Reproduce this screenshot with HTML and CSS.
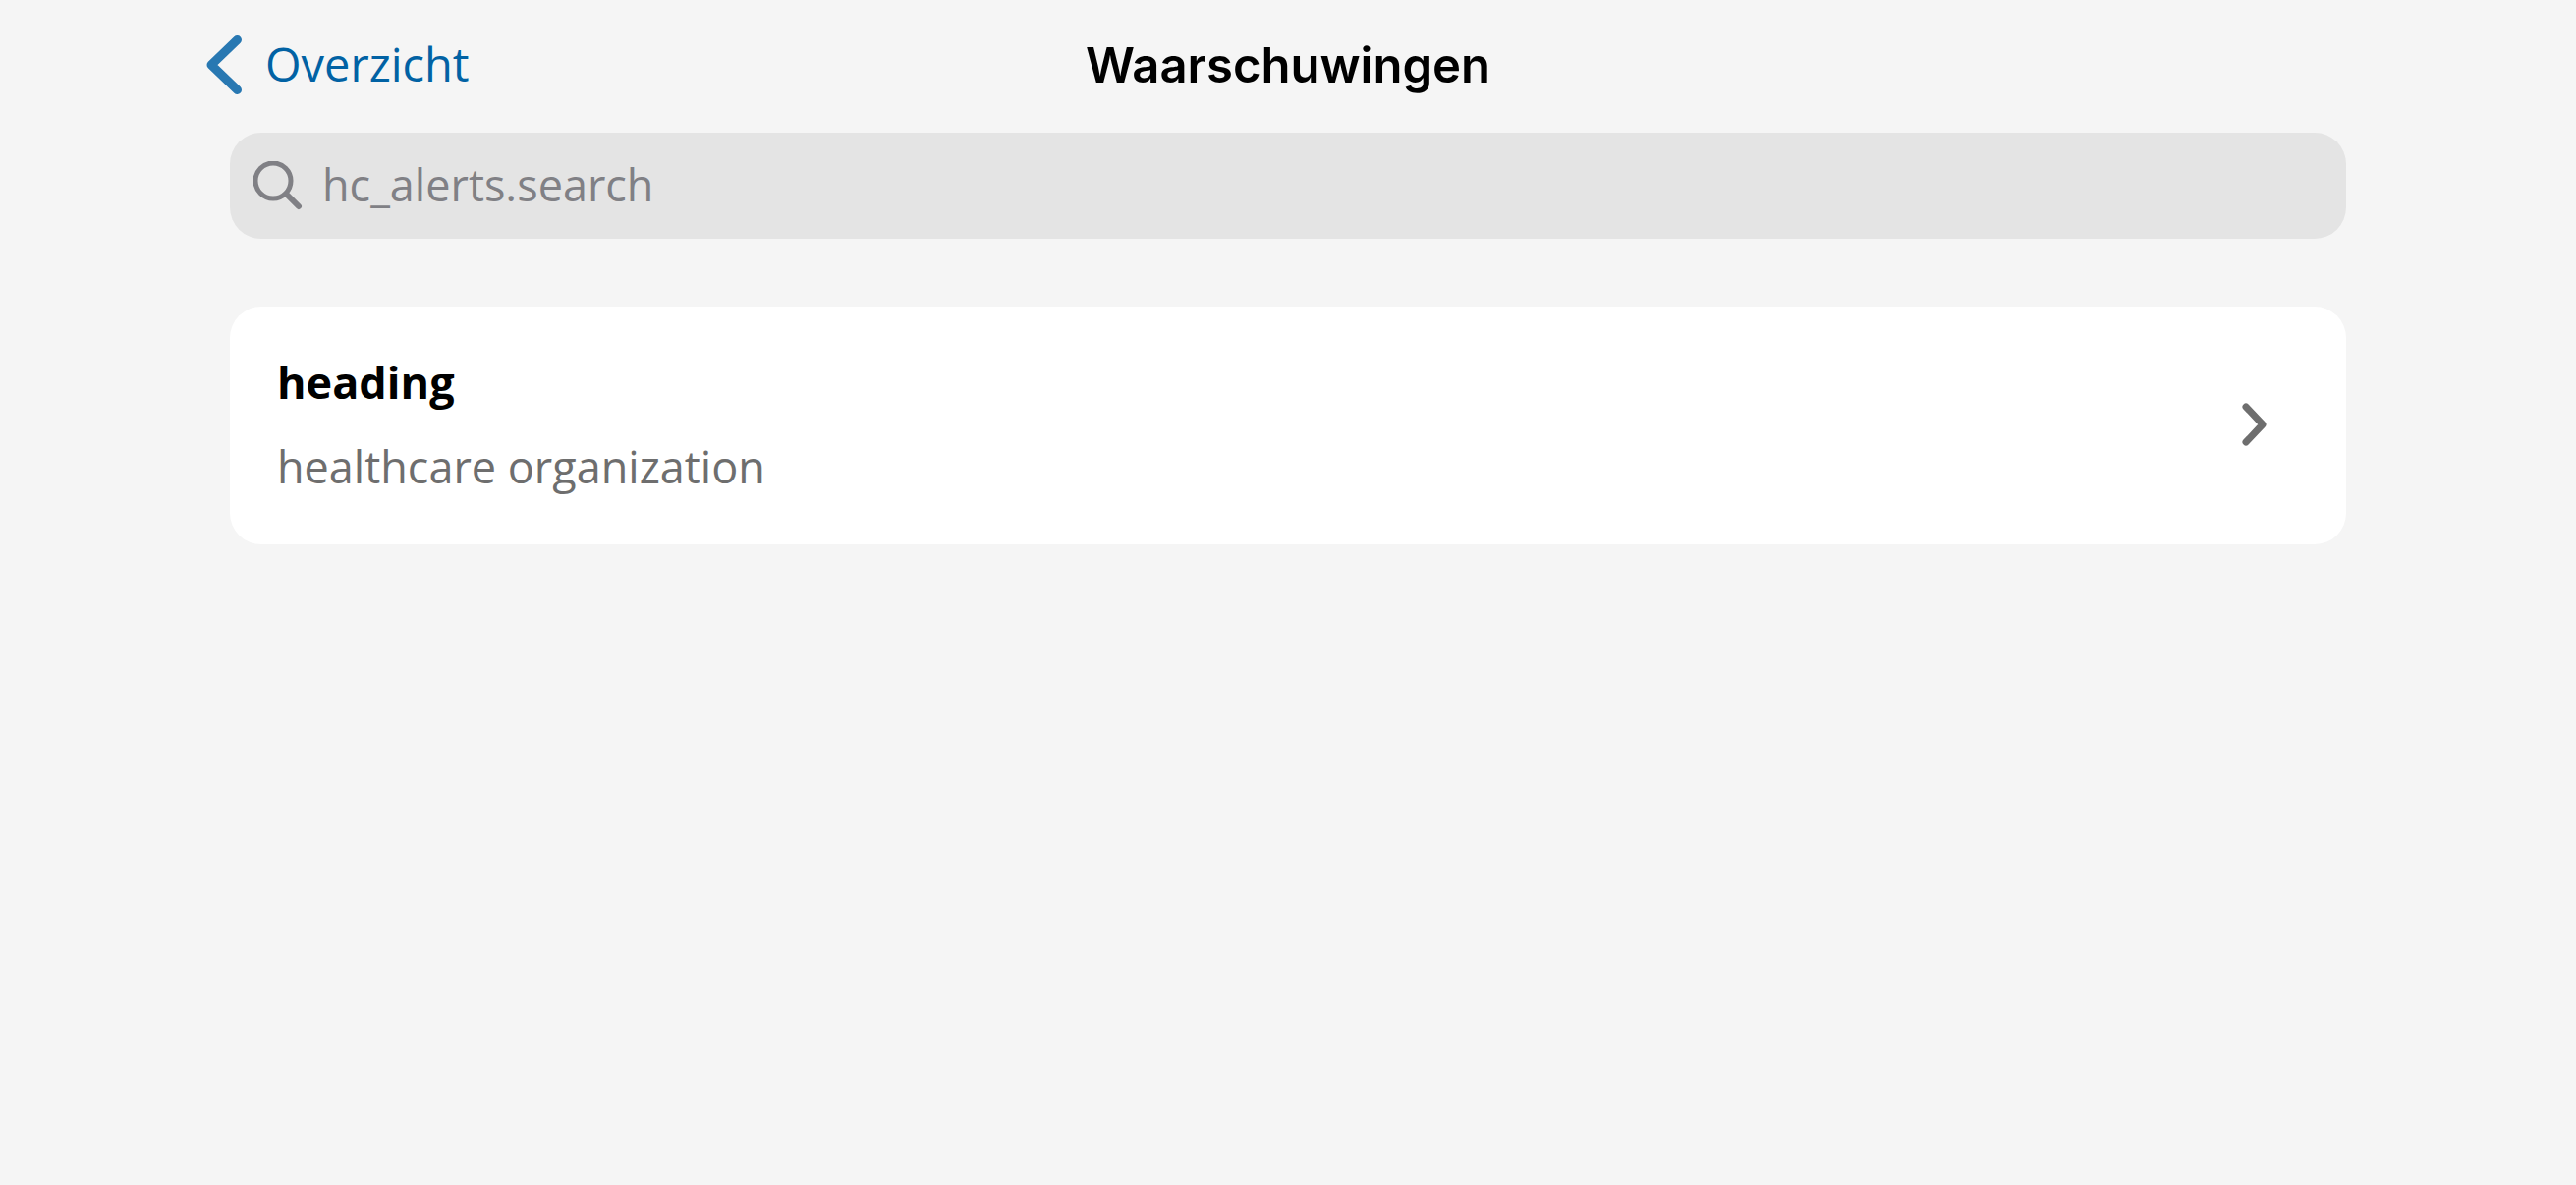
FILE: index.html
```html
<!DOCTYPE html>
<html lang="nl">
<head>
<meta charset="utf-8">
<meta name="viewport" content="width=device-width, initial-scale=1">
<title>Waarschuwingen</title>
<link rel="stylesheet" href="styles.css">
</head>
<body>
<header class="navbar">
  <a class="back" href="#">
    <svg class="back-icon" viewBox="0 0 36 60" aria-hidden="true"><path d="M31.500 4.500L5 30l26.500 25.500"/></svg>
    <span class="back-label">Overzicht</span>
  </a>
  <h1 class="title">Waarschuwingen</h1>
</header>
<main class="content">
  <label class="search">
    <svg class="search-icon" viewBox="0 0 50 50" aria-hidden="true"><circle cx="20" cy="20" r="18"/><path class="search-handle" d="M34 34l12 12"/></svg>
    <input class="search-input" type="search" aria-label="Search" placeholder="hc_alerts.search">
  </label>
  <a class="card" href="#">
    <span class="card-text">
      <span class="card-heading">heading</span>
      <span class="card-sub">healthcare organization</span>
    </span>
    <svg class="chevron" viewBox="0 0 24 42" aria-hidden="true"><path d="M3 3l17 18L3 39"/></svg>
  </a>
</main>
</body>
</html>
```
FILE: styles.css
```css
* { box-sizing: border-box; }
body {
  margin: 0;
  background: #f5f5f5;
  font-family: "Open Sans", "Noto Sans", sans-serif;
  font-size: 45px;
}
a { text-decoration: none; }
svg { flex: none; fill: none; stroke: currentColor; stroke-linecap: round; stroke-linejoin: round; }
.navbar {
  display: grid;
  grid-template-columns: 1fr auto 1fr;
  align-items: center;
  height: 132px;
  padding: 0 210px;
}
.back { display: flex; align-items: center; gap: 24px; color: #0162a4; font-size: 47px; line-height: 64px; }
.back-icon { width: 36px; height: 60px; stroke-width: 9; color: #2878b2; }
.back-label { padding-bottom: 2px; }
.title { margin: 0; padding-top: 2px; font: 600 49px/64px Inter, sans-serif; color: #000; }
.content { padding: 3px 234px; }
.search {
  display: flex;
  align-items: center;
  gap: 20px;
  height: 108px;
  padding: 0 24px;
  border-radius: 32px;
  background: #e4e4e4;
  color: #808085;
}
.search-icon { width: 50px; height: 50px; stroke-width: 5; }
.search-handle { stroke-width: 6; }
.search-input {
  flex: 1;
  min-width: 0;
  padding: 0 0 4px;
  border: 0;
  outline: 0;
  background: none;
  font: inherit;
  color: #000;
}
.search-input::placeholder { color: #808085; opacity: 1; }
.card {
  display: flex;
  align-items: center;
  justify-content: space-between;
  margin-top: 69px;
  padding: 44px 81px 46px 48px;
  border-radius: 32px;
  background: #fff;
}
.card-text { display: flex; flex-direction: column; gap: 20px; line-height: 66px; }
.card-heading { font-weight: 700; color: #000; }
.card-sub { color: #6e6e6e; }
.chevron { width: 24px; height: 42px; stroke-width: 7; overflow: visible; color: #6e6e6e; }
```
